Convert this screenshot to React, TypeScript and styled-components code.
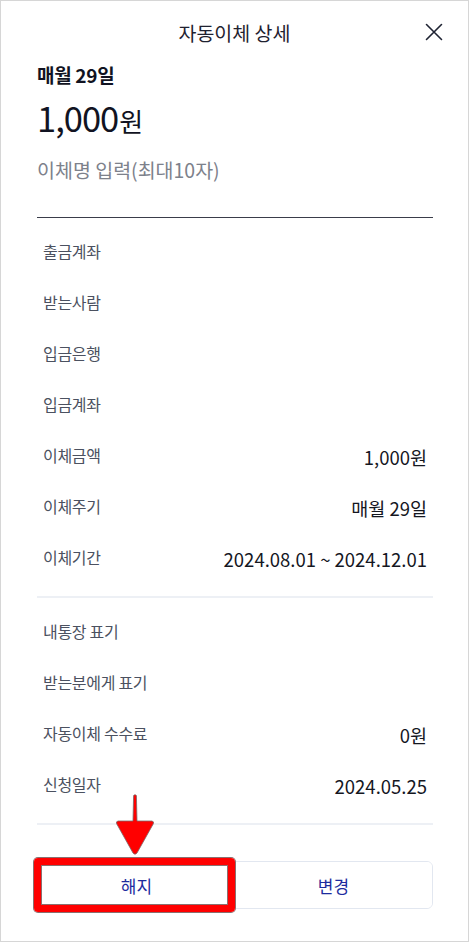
import React from "react";
import styled, { createGlobalStyle } from "styled-components";

const GlobalStyle = createGlobalStyle`
  * { box-sizing: border-box; }
  html, body { margin: 0; padding: 0; background: #ffffff; }
  body {
    font-family: "Noto Sans CJK KR", "Noto Sans", sans-serif;
    color: #111827;
  }
`;

type Row = { label: string; value?: string };

const transferRows: Row[] = [
  { label: "출금계좌" },
  { label: "받는사람" },
  { label: "입금은행" },
  { label: "입금계좌" },
  { label: "이체금액", value: "1,000원" },
  { label: "이체주기", value: "매월 29일" },
  { label: "이체기간", value: "2024.08.01 ~ 2024.12.01" },
];

const extraRows: Row[] = [
  { label: "내통장 표기" },
  { label: "받는분에게 표기" },
  { label: "자동이체 수수료", value: "0원" },
  { label: "신청일자", value: "2024.05.25" },
];

const CloseIcon = () => (
  <svg width="18" height="18" viewBox="0 0 18 18" fill="none">
    <path d="M1.5 1.5L16.5 16.5M16.5 1.5L1.5 16.5" stroke="#1f2333" strokeWidth="1.6" strokeLinecap="round" />
  </svg>
);

const PointerArrow = () => (
  <svg width="42" height="64" viewBox="0 0 42 64" fill="none">
    <path
      d="M19.6 2.5 Q21 0.8 22.4 2.5 L23 28 L38 28 Q40.5 28.5 39.2 31 L23 60 Q21 62.5 19 60 L2.8 31 Q1.5 28.5 4 28 L19 28 Z"
      fill="#ff0000"
      stroke="#7a6a6a"
      strokeWidth="0.8"
      strokeLinejoin="round"
    />
  </svg>
);

export default function App() {
  return (
    <>
      <GlobalStyle />
      <Frame>
        <Header>
          <HeaderTitle>자동이체 상세</HeaderTitle>
          <CloseButton aria-label="닫기">
            <CloseIcon />
          </CloseButton>
        </Header>

        <Content>
          <Schedule>매월 29일</Schedule>
          <Amount>
            1,000<AmountUnit>원</AmountUnit>
          </Amount>
          <NameField>
            <NameInput placeholder="이체명 입력(최대10자)" />
          </NameField>

          <RowList>
            {transferRows.map(row => (
              <InfoRow key={row.label}>
                <RowLabel>{row.label}</RowLabel>
                {row.value && <RowValue>{row.value}</RowValue>}
              </InfoRow>
            ))}
          </RowList>
          <Divider />
          <RowList>
            {extraRows.map(row => (
              <InfoRow key={row.label}>
                <RowLabel>{row.label}</RowLabel>
                {row.value && <RowValue>{row.value}</RowValue>}
              </InfoRow>
            ))}
          </RowList>
          <Divider />

          <ActionArea>
            <ButtonGroup>
              <ActionButton>해지</ActionButton>
              <ActionButton>변경</ActionButton>
            </ButtonGroup>
            <HighlightBox />
            <ArrowWrap>
              <PointerArrow />
            </ArrowWrap>
          </ActionArea>
        </Content>
      </Frame>
    </>
  );
}

const Frame = styled.div`
  width: 469px;
  height: 942px;
  border: 1px solid #d6d6d6;
  background: #ffffff;
  display: flex;
  flex-direction: column;
  overflow: hidden;
`;

const Header = styled.div`
  position: relative;
  height: 62px;
  display: flex;
  align-items: center;
  justify-content: center;
  flex-shrink: 0;
`;

const HeaderTitle = styled.h1`
  margin: 0;
  font-size: 19.5px;
  font-weight: 400;
  color: #1f2230;
`;

const CloseButton = styled.button`
  position: absolute;
  right: 25px;
  top: 22px;
  padding: 0;
  border: 0;
  background: none;
  display: flex;
  cursor: pointer;
`;

const Content = styled.div`
  padding: 0 35px 0 36px;
  display: flex;
  flex-direction: column;
`;

const Schedule = styled.div`
  font-size: 19px;
  font-weight: 700;
  line-height: 24px;
  color: #111322;
  letter-spacing: -0.3px;
`;

const Amount = styled.div`
  margin-top: 8px;
  font-size: 34.5px;
  line-height: 44px;
  font-weight: 400;
  color: #111322;
  letter-spacing: -1px;
`;

const AmountUnit = styled.span`
  font-size: 26px;
  letter-spacing: 0;
  margin-left: 1px;
`;

const NameField = styled.div`
  margin-top: 14px;
  padding-bottom: 34px;
  border-bottom: 1.5px solid #3a3d4a;
`;

const NameInput = styled.input`
  width: 100%;
  border: 0;
  outline: none;
  padding: 0;
  font-family: inherit;
  font-size: 19.5px;
  line-height: 26px;
  color: #111322;
  background: transparent;

  &::placeholder {
    color: #7d818b;
  }
`;

const RowList = styled.div`
  display: flex;
  flex-direction: column;
  padding: 9px 6px 12px 6px;
`;

const InfoRow = styled.div`
  height: 51px;
  display: flex;
  align-items: center;
  justify-content: space-between;
`;

const RowLabel = styled.span`
  font-size: 16px;
  color: #4b5160;
  letter-spacing: -0.3px;
  margin-top: -4px;
`;

const RowValue = styled.span`
  font-size: 18.5px;
  color: #15171f;
`;

const Divider = styled.div`
  height: 2px;
  background: #edf0f5;
`;

const ActionArea = styled.div`
  position: relative;
  margin-top: 36px;
`;

const ButtonGroup = styled.div`
  height: 48px;
  display: grid;
  grid-template-columns: 1fr 1fr;
  border: 1px solid #e2e7f0;
  border-radius: 6px;
  overflow: hidden;
`;

const ActionButton = styled.button`
  border: 0;
  background: #ffffff;
  font-family: inherit;
  font-size: 17px;
  color: #1c2b9e;
  cursor: pointer;
`;

const HighlightBox = styled.div`
  position: absolute;
  left: -3px;
  top: -3px;
  width: 201px;
  height: 54px;
  border: 7px solid #ff0000;
  border-radius: 4px;
  box-shadow: 0 0 0 1px #8a7070, inset 0 0 0 1px #8a7070;
  pointer-events: none;
`;

const ArrowWrap = styled.div`
  position: absolute;
  left: 77px;
  top: -68px;
  display: flex;
  pointer-events: none;
`;
